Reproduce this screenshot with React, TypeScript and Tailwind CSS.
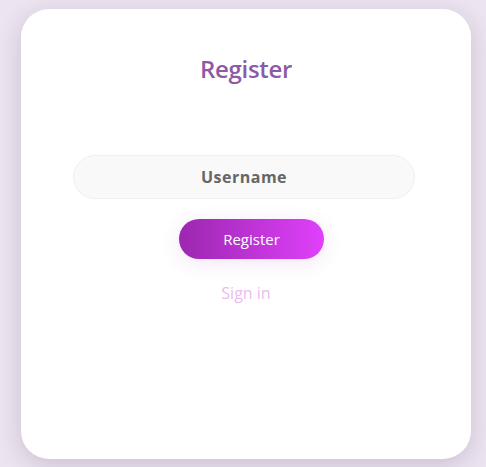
export default function App() {
  return (
    <div className="min-h-screen w-full bg-[#ece4f0] flex pl-[21px] pt-[9px]" style={{ fontFamily: '"Open Sans", "Noto Sans", sans-serif' }}>
      <div className="w-[450px] h-[450px] bg-white rounded-[28px] shadow-[0_6px_24px_rgba(60,30,70,0.18)] flex flex-col items-center">
        <h1 className="mt-[42px] text-[24px] font-semibold text-[#8e5aa8] tracking-[-0.3px]">Register</h1>
        <input
          type="text"
          placeholder="Username"
          className="mt-[68px] mr-[4px] w-[342px] h-[44px] rounded-full bg-[#f9f9f9] border border-[#f0f0f0] text-center text-[16px] font-bold tracking-[0.5px] text-[#666] placeholder:text-[#666] outline-none"
        />
        <button className="mt-[20px] ml-[11px] w-[145px] h-[40px] rounded-full bg-gradient-to-r from-[#9c27b0] to-[#e040fb] text-white text-[15px] shadow-[0_4px_20px_rgba(156,39,176,0.12)]">
          Register
        </button>
        <a className="mt-[22px] text-[16px] text-[#e8bdee] cursor-pointer">Sign in</a>
      </div>
    </div>
  )
}
